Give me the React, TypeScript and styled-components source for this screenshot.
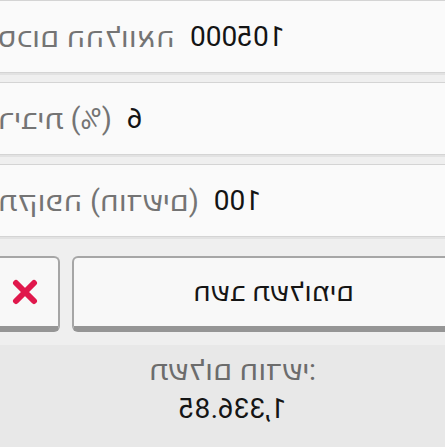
import React from "react";
import styled, { createGlobalStyle } from "styled-components";

const GlobalStyle = createGlobalStyle`
  html, body {
    margin: 0;
    padding: 0;
    background: #efefef;
  }
  body {
    font-family: Roboto, "DejaVu Sans", sans-serif;
  }
`;

interface Field {
  label: string;
  value: string;
}

const fields: Field[] = [
  { label: "סכום ההלוואה", value: "105000" },
  { label: "ריבית (%)", value: "6" },
  { label: "תקופה (חודשים)", value: "100" },
];

const CrossIcon = () => (
  <svg width="26" height="26" viewBox="0 0 26 26">
    <path
      d="M4 4 L22 22 M22 4 L4 22"
      stroke="#e0184c"
      strokeWidth="6"
      strokeLinecap="round"
    />
  </svg>
);

const App: React.FC = () => {
  return (
    <>
      <GlobalStyle />
      {/* the screenshot is a mirror image of the RTL screen */}
      <Viewport>
        <Screen>
          <FieldList>
            {fields.map((f) => (
              <FieldBox key={f.label}>
                <FieldLabel>{f.label}</FieldLabel>
                <FieldValue>{f.value}</FieldValue>
              </FieldBox>
            ))}
          </FieldList>
          <ButtonRow>
            <ClearButton aria-label="נקה">
              <CrossIcon />
            </ClearButton>
            <CalcButton>חשב תשלומים</CalcButton>
          </ButtonRow>
          <Result>
            <ResultLabel>תשלום חודשי:</ResultLabel>
            <ResultValue>1,336.85</ResultValue>
          </Result>
        </Screen>
      </Viewport>
    </>
  );
};

export default App;

const Viewport = styled.div`
  width: 445px;
  height: 447px;
  overflow: hidden;
  transform: scaleX(-1);
  background: #efefef;
`;

const Screen = styled.div`
  width: 485px;
  margin-left: -30px;
  height: 100%;
  direction: rtl;
  display: flex;
  flex-direction: column;
`;

const FieldList = styled.div`
  display: flex;
  flex-direction: column;
  gap: 9px;
`;

const FieldBox = styled.div`
  height: 73px;
  box-sizing: border-box;
  display: flex;
  align-items: center;
  gap: 15px;
  padding: 0 7px;
  background: #fafafa;
  border: 1px solid #d4d4d4;
  border-radius: 6px;
  box-shadow: 0 2px 0 #e2e2e2;
`;

const FieldLabel = styled.span`
  color: #747474;
  font-size: 29px;
  white-space: nowrap;
`;

const FieldValue = styled.span`
  color: #141414;
  font-size: 28px;
  white-space: nowrap;
`;

const ButtonRow = styled.div`
  display: flex;
  gap: 12px;
  margin-top: 19px;
  height: 76px;
`;

const BaseButton = styled.button`
  box-sizing: border-box;
  height: 76px;
  background: #f8f8f8;
  border: 2px solid #a6a6a6;
  border-bottom: 6px solid #959595;
  border-radius: 6px;
  display: flex;
  align-items: center;
  justify-content: center;
  padding: 0;
  font-family: Roboto, "DejaVu Sans", sans-serif;
`;

const ClearButton = styled(BaseButton)`
  width: 70px;
  flex-shrink: 0;
`;

const CalcButton = styled(BaseButton)`
  flex: 1;
  color: #151515;
  font-size: 27px;
`;

const Result = styled.div`
  margin-top: 13px;
  flex: 1;
  background: #e8e8e8;
  display: flex;
  flex-direction: column;
  align-items: center;
  padding-top: 8px;
  gap: 5px;
`;

const ResultLabel = styled.div`
  color: #6c6c6c;
  font-size: 29px;
`;

const ResultValue = styled.div`
  color: #151515;
  font-size: 28px;
  direction: ltr;
`;
